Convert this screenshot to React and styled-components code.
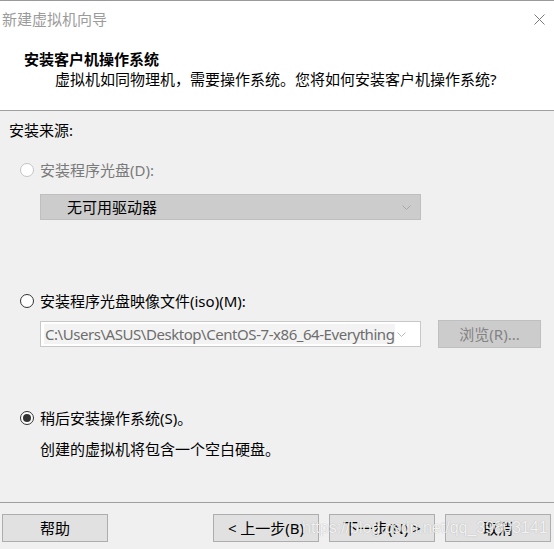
import styled, { createGlobalStyle } from "styled-components";

const GlobalStyle = createGlobalStyle`
  html, body {
    margin: 0;
    padding: 0;
    background: #f0f0f0;
  }
  * {
    box-sizing: border-box;
  }
`;

const Window = styled.div`
  position: relative;
  width: 554px;
  height: 549px;
  display: flex;
  flex-direction: column;
  background: #f0f0f0;
  font-family: "Noto Sans", "Noto Sans CJK SC", sans-serif;
  font-size: 15px;
  line-height: 20px;
  color: #000;
  overflow: hidden;
`;

const Header = styled.header`
  height: 111px;
  background: #fff;
  border-top: 1px solid #9a9a9a;
  border-bottom: 1px solid #a0a0a0;
  display: flex;
  flex-direction: column;
`;

const TitleBar = styled.div`
  height: 36px;
  display: flex;
  align-items: center;
  justify-content: space-between;
  padding: 0 9px 0 2px;
`;

const WindowTitle = styled.span`
  color: #9b9b9b;
`;

const CloseIcon = styled.svg`
  width: 11px;
  height: 11px;
`;

const Heading = styled.h1`
  margin: 12px 0 0 24px;
  font-size: 15px;
  font-weight: bold;
  line-height: 20px;
`;

const SubHeading = styled.p`
  margin: 0 0 0 55px;
`;

const Body = styled.main`
  flex: 1;
  padding: 9px 0 0 9px;
  display: flex;
  flex-direction: column;
`;

const SectionLabel = styled.div``;

const RadioRow = styled.label`
  display: flex;
  align-items: center;
  gap: 6px;
  margin-top: ${(p) => p.$top}px;
  margin-left: 11px;
  color: ${(p) => (p.$disabled ? "#7a7a7a" : "#000")};
`;

const RadioCircle = styled.span`
  position: relative;
  width: 14px;
  height: 14px;
  border-radius: 50%;
  background: #fff;
  border: 1px solid ${(p) => (p.$disabled ? "#c4c4c4" : "#333")};

  &::after {
    content: "";
    display: ${(p) => (p.$checked ? "block" : "none")};
    position: absolute;
    left: 2px;
    top: 2px;
    width: 8px;
    height: 8px;
    border-radius: 50%;
    background: #333;
  }
`;

const FieldRow = styled.div`
  display: flex;
  align-items: center;
  gap: 17px;
  margin-top: ${(p) => p.$top}px;
  margin-left: 31px;
`;

const Select = styled.div`
  width: 381px;
  height: 26px;
  display: flex;
  align-items: center;
  justify-content: space-between;
  border: 1px solid ${(p) => (p.$disabled ? "#bfbfbf" : "#c8c8c8")};
  background: ${(p) => (p.$disabled ? "#cccccc" : "#fff")};
  padding: ${(p) => (p.$disabled ? "0 9px 0 25px" : "0 14px 0 3px")};
`;

const SelectText = styled.span`
  white-space: nowrap;
  overflow: hidden;
  color: ${(p) => (p.$muted ? "#6d6d6d" : "#000")};
  background: ${(p) => (p.$muted ? "#f3f3f3" : "transparent")};
  letter-spacing: ${(p) => (p.$muted ? "-0.45px" : "normal")};
  padding: 0 1px;
  max-width: 358px;
`;

const Chevron = styled.svg`
  width: 9px;
  height: 5px;
  flex-shrink: 0;
`;

const Button = styled.button`
  width: ${(p) => p.$w || 106}px;
  height: 28px;
  padding: 0;
  font: inherit;
  border: 1px solid ${(p) => (p.disabled ? "#bfbfbf" : "#adadad")};
  background: ${(p) => (p.disabled ? "#cccccc" : "#e1e1e1")};
  color: ${(p) => (p.disabled ? "#838383" : "#000")};
`;

const Note = styled.p`
  margin: 11px 0 0 31px;
`;

const Footer = styled.footer`
  height: 47px;
  border-top: 1px solid #a0a0a0;
  display: flex;
  align-items: flex-start;
  padding: 11px 0 0 2px;
`;

const NavGroup = styled.div`
  margin-left: auto;
  display: flex;
  gap: 10px;
  padding-right: 3px;
`;

const Watermark = styled.span`
  position: absolute;
  left: 302px;
  top: 518px;
  font-family: "Liberation Sans", Arial, sans-serif;
  font-size: 16px;
  line-height: 20px;
  color: rgba(255, 255, 255, 0.85);
  text-shadow: 0 0 1px rgba(120, 120, 120, 0.6);
  pointer-events: none;
  white-space: nowrap;
`;

const ChevronIcon = ({ color }) => (
  <Chevron viewBox="0 0 9 5">
    <path d="M0.5 0.5 L4.5 4.5 L8.5 0.5" fill="none" stroke={color} strokeWidth="1" />
  </Chevron>
);

export default function App() {
  return (
    <>
      <GlobalStyle />
      <Window>
        <Header>
          <TitleBar>
            <WindowTitle>新建虚拟机向导</WindowTitle>
            <CloseIcon viewBox="0 0 11 11">
              <path d="M0.5 0.5 L10.5 10.5 M10.5 0.5 L0.5 10.5" stroke="#7a7a7a" strokeWidth="1" />
            </CloseIcon>
          </TitleBar>
          <Heading>安装客户机操作系统</Heading>
          <SubHeading>虚拟机如同物理机，需要操作系统。您将如何安装客户机操作系统?</SubHeading>
        </Header>

        <Body>
          <SectionLabel>安装来源:</SectionLabel>

          <RadioRow $top={20} $disabled>
            <RadioCircle $disabled />
            安装程序光盘(D):
          </RadioRow>
          <FieldRow $top={14}>
            <Select $disabled>
              <SelectText>无可用驱动器</SelectText>
              <ChevronIcon color="#a8a8a8" />
            </Select>
          </FieldRow>

          <RadioRow $top={71}>
            <RadioCircle />
            安装程序光盘映像文件(iso)(M):
          </RadioRow>
          <FieldRow $top={9}>
            <Select>
              <SelectText $muted>C:\Users\ASUS\Desktop\CentOS-7-x86_64-Everything</SelectText>
              <ChevronIcon color="#b8b8b8" />
            </Select>
            <Button $w={103} disabled>浏览(R)...</Button>
          </FieldRow>

          <RadioRow $top={60}>
            <RadioCircle $checked />
            稍后安装操作系统(S)。
          </RadioRow>
          <Note>创建的虚拟机将包含一个空白硬盘。</Note>
        </Body>

        <Footer>
          <Button>帮助</Button>
          <NavGroup>
            <Button>&lt; 上一步(B)</Button>
            <Button>下一步(N) &gt;</Button>
            <Button>取消</Button>
          </NavGroup>
        </Footer>
        <Watermark>https://blog.csdn.net/qq_39803141</Watermark>
      </Window>
    </>
  );
}
